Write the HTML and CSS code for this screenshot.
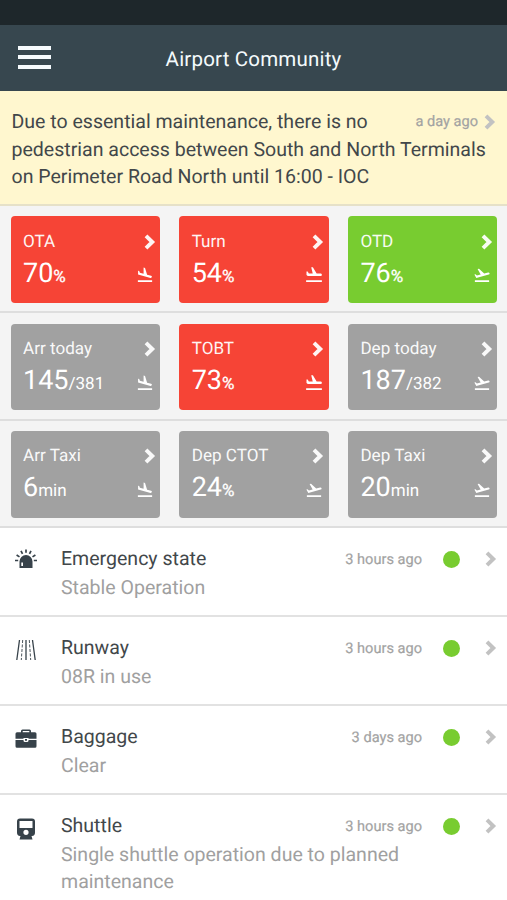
FILE: index.html
```html
<!DOCTYPE html>
<html lang="en">
<head>
<meta charset="utf-8">
<title>Airport Community</title>
<link rel="stylesheet" href="styles.css">
</head>
<body>
<svg class="defs" width="0" height="0" aria-hidden="true">
  <symbol id="chevron" viewBox="0 0 12 16"><path d="M2 1.800 8.300 8 2 14.200" fill="none" stroke="currentColor" stroke-width="3.900"/></symbol>
  <symbol id="land" viewBox="0 0 24 24"><path fill="currentColor" d="M2.500 19h19v2.300h-19zm16.840-3.150c.8.210 1.620-.26 1.840-1.060.21-.8-.26-1.620-1.060-1.840l-5.310-1.420-2.760-9.020L10.120 2v8.280L5.150 8.950l-.93-2.320-1.450-.39v5.170z"/></symbol>
  <symbol id="takeoff" viewBox="0 0 24 24"><path fill="currentColor" d="M2.500 19h19v2.300h-19zm19.570-9.360c-.21-.8-1.040-1.280-1.840-1.060L14.920 10l-6.900-6.430-1.930.51 4.140 7.170-4.970 1.330-1.970-1.540-1.450.39 2.590 4.490L21 11.490c.81-.23 1.280-1.050 1.070-1.850z"/></symbol>
  <symbol id="ground" viewBox="0 0 24 24"><path fill="currentColor" d="M1.500 19h21v2.400h-21zM2 7.300h1.600l1.500 2.700h5.200L8.300 1.500h2.200l5 8.500h5.300c1 0 1.700.8 1.700 1.700s-.7 1.700-1.700 1.700H3.700L2 12z"/></symbol>
</svg>
<div class="status-bar"></div>
<header class="app-bar">
  <div class="menu"><span></span><span></span><span></span></div>
  <h1 class="title">Airport Community</h1>
</header>
<section class="alert">
  <div class="alert-meta"><span class="time">a day ago</span><svg class="chev"><use href="#chevron"/></svg></div>
  <p>Due to essential maintenance, there is no<br>pedestrian access between South and North Terminals<br>on Perimeter Road North until 16:00 - IOC</p>
</section>
<main>
  <div class="row">
    <div class="card red"><div class="label">OTA<svg class="chev"><use href="#chevron"/></svg></div><div class="value"><span>70<small class="unit">%</small></span><svg class="plane"><use href="#land"/></svg></div></div>
    <div class="card red"><div class="label">Turn<svg class="chev"><use href="#chevron"/></svg></div><div class="value"><span>54<small class="unit">%</small></span><svg class="plane"><use href="#ground"/></svg></div></div>
    <div class="card green"><div class="label">OTD<svg class="chev"><use href="#chevron"/></svg></div><div class="value"><span>76<small class="unit">%</small></span><svg class="plane"><use href="#takeoff"/></svg></div></div>
  </div>
  <div class="row">
    <div class="card"><div class="label">Arr today<svg class="chev"><use href="#chevron"/></svg></div><div class="value"><span>145<small>/381</small></span><svg class="plane"><use href="#land"/></svg></div></div>
    <div class="card red"><div class="label">TOBT<svg class="chev"><use href="#chevron"/></svg></div><div class="value"><span>73<small class="unit">%</small></span><svg class="plane"><use href="#ground"/></svg></div></div>
    <div class="card"><div class="label">Dep today<svg class="chev"><use href="#chevron"/></svg></div><div class="value"><span>187<small>/382</small></span><svg class="plane"><use href="#takeoff"/></svg></div></div>
  </div>
  <div class="row">
    <div class="card"><div class="label">Arr Taxi<svg class="chev"><use href="#chevron"/></svg></div><div class="value"><span>6<small>min</small></span><svg class="plane"><use href="#land"/></svg></div></div>
    <div class="card"><div class="label">Dep CTOT<svg class="chev"><use href="#chevron"/></svg></div><div class="value"><span>24<small class="unit">%</small></span><svg class="plane"><use href="#takeoff"/></svg></div></div>
    <div class="card"><div class="label">Dep Taxi<svg class="chev"><use href="#chevron"/></svg></div><div class="value"><span>20<small>min</small></span><svg class="plane"><use href="#takeoff"/></svg></div></div>
  </div>
  <ul class="list">
    <li class="item">
      <svg class="icon" viewBox="0 0 24 24"><path fill="currentColor" fill-rule="evenodd" d="M5.500 21V14.500a6.500 6.500 0 0 1 13 0V21zM7.300 15.500v3.600h1.700v-3.600z"/><path d="M1 13.500h3.200M19.800 13.500H23M2.600 8l2.900 1.900M21.400 8l-2.900 1.900M7 3.900l1.500 2.900M17 3.900l-1.500 2.900M12 2.500v3.300" stroke="currentColor" stroke-width="1.700"/></svg>
      <div class="text"><div class="name">Emergency state</div><div class="detail">Stable Operation</div></div>
      <div class="meta"><span class="time">3 hours ago</span><i class="dot"></i><svg class="chev"><use href="#chevron"/></svg></div>
    </li>
    <li class="item">
      <svg class="icon low" viewBox="0 0 24 24"><path d="M5.500 2 2.800 22M18.500 2l2.700 20M12 2v20" fill="none" stroke="currentColor" stroke-width="1.300"/><path d="M8.700 2 7.300 22M15.300 2l1.400 20" fill="none" stroke="currentColor" stroke-width=".9" stroke-dasharray="3 1.500"/></svg>
      <div class="text"><div class="name">Runway</div><div class="detail">08R in use</div></div>
      <div class="meta"><span class="time">3 hours ago</span><i class="dot"></i><svg class="chev"><use href="#chevron"/></svg></div>
    </li>
    <li class="item">
      <svg class="icon low" viewBox="0 0 24 24"><path fill="currentColor" fill-rule="evenodd" d="M7 5.300V4q0-1.500 1.500-1.500h7Q17 2.500 17 4v1.300h4q1.500 0 1.500 1.500v5h-8V11h-5v.8h-8v-5q0-1.500 1.500-1.500zM8.700 5.300h6.600V4H8.700zM1.500 12.900h8v.7q0 1.500 1.500 1.500h2q1.500 0 1.500-1.500v-.7h8v6.300q0 1.500-1.500 1.500H3q-1.500 0-1.500-1.500zM11 12h2v1.700h-2z"/></svg>
      <div class="text"><div class="name">Baggage</div><div class="detail">Clear</div></div>
      <div class="meta"><span class="time">3 days ago</span><i class="dot"></i><svg class="chev"><use href="#chevron"/></svg></div>
    </li>
    <li class="item">
      <svg class="icon lower" viewBox="0 0 24 24"><path fill="currentColor" fill-rule="evenodd" d="M6 1.500h12q3 0 3 3v11q0 3.200-3 3.500h-.5l1 3.500h-13l1-3.500H6q-3-.3-3-3.500v-11q0-3 3-3zM5.500 4v7h13V4zM12 12.700a2.600 2.600 0 1 0 0 5.200 2.600 2.600 0 0 0 0-5.200z"/></svg>
      <div class="text"><div class="name">Shuttle</div><div class="detail">Single shuttle operation due to planned<br>maintenance</div></div>
      <div class="meta"><span class="time">3 hours ago</span><i class="dot"></i><svg class="chev"><use href="#chevron"/></svg></div>
    </li>
  </ul>
</main>
</body>
</html>
```
FILE: styles.css
```css
* { box-sizing: border-box; }
body { margin: 0; height: 900px; overflow: hidden; font-family: Roboto, sans-serif; text-rendering: geometricPrecision; color: #42474a; background: #fff; }
.defs { display: block; width: 0; height: 0; }
.status-bar { height: 25px; background: #1e272b; }
.app-bar { display: grid; grid-template-columns: 60px 1fr 60px; height: 66px; background: #37474f; }
.menu { display: flex; flex-direction: column; gap: 5.3px; padding: 21px 0 0 18px; }
.menu span { width: 33px; height: 4px; background: #f6fbfd; }
.title { margin: 0; font-size: 20.5px; line-height: 70px; font-weight: 400; letter-spacing: .18px; text-align: center; color: #f4fafc; }
.alert { height: 115px; padding: 17px 11px 0 11.5px; background: #fff7cf; border-bottom: 2px solid #e6e1c8; font-size: 19.55px; line-height: 27.5px; white-space: nowrap; }
.alert p { margin: 0; }
.alert-meta { float: right; display: flex; align-items: center; gap: 6px; height: 27px; }
.chev { display: block; width: 12px; height: 16px; color: #c2c2c2; flex: none; }
.time { font-size: 14.6px; color: #a3a3a3; -webkit-text-stroke: .2px #a3a3a3; }
.row { display: grid; grid-template-columns: repeat(3, 149.5px); column-gap: 19.2px; height: 107.4px; padding: 10.4px 0 0 10.5px; background: #f4f4f4; border-bottom: 2px solid #dedede; }
.card { height: 86.4px; padding: 11.3px 4.5px 0 12.5px; border-radius: 4px; background: #a1a1a1; color: #fff; white-space: nowrap; }
.red { background: #f64436; }
.green { background: #78cc30; }
.label { display: flex; justify-content: space-between; align-items: center; height: 28px; font-size: 17.1px; opacity: .94; }
.card .chev { color: #fff; }
.value { display: flex; justify-content: space-between; align-items: center; height: 38px; padding-right: 1.5px; font-size: 27px; line-height: 38px; }
.value small { font-size: 17px; }
.value .unit { -webkit-text-stroke: .3px #fff; }
.plane { width: 18px; height: 18px; margin-top: 1px; }
.list { margin: 0; padding: 0; list-style: none; }
.item { display: grid; grid-template-columns: 61px 1fr; height: 89px; padding-top: 17px; border-bottom: 2px solid #e2e2e2; white-space: nowrap; }
.item:last-child { height: 120px; }
.icon { width: 24px; height: 24px; margin: 2px 0 0 14px; color: #37424a; }
.icon.low { margin-top: 4px; }
.icon.lower { margin-top: 5px; }
.text { grid-area: 1 / 2; font-size: 19.55px; line-height: 28.5px; }
.detail { color: #a0a0a0; line-height: 27.5px; }
.meta { grid-area: 1 / 2; justify-self: end; display: flex; align-items: center; height: 28px; padding-right: 10px; }
.meta .time { margin-bottom: 1px; }
.dot { width: 17px; height: 17px; margin: 0 25px 0 21px; border-radius: 50%; background: #78cc30; }
```
